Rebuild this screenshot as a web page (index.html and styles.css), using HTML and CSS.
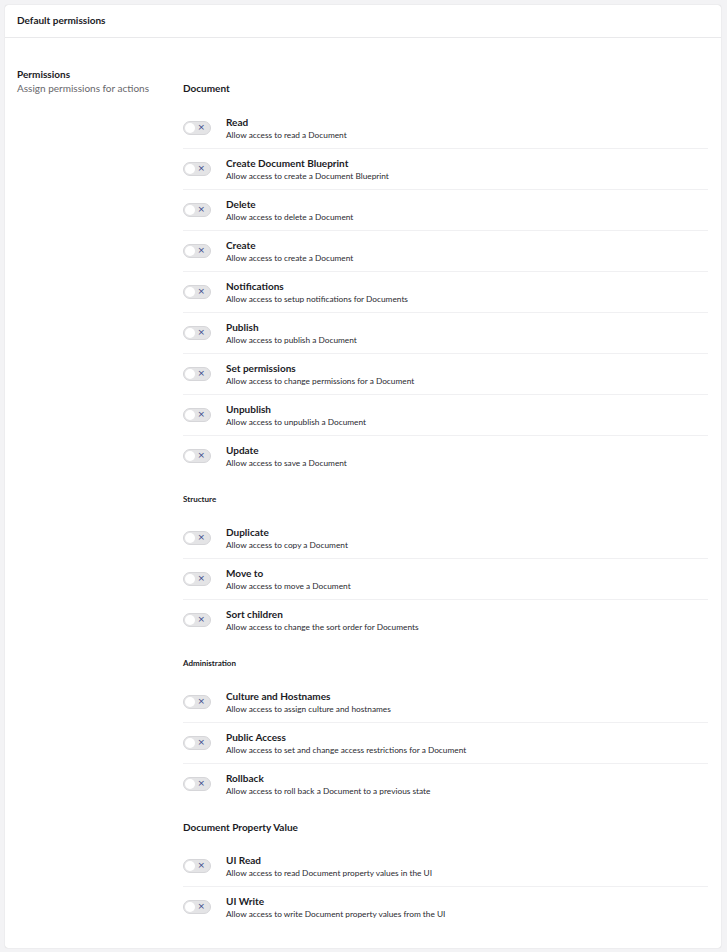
FILE: index.html
```html
<!DOCTYPE html>
<html>
<head>
<meta charset="utf-8">
<link rel="stylesheet" href="styles.css">
</head>
<body>
<div class="card">
  <div class="card-header">Default permissions</div>
  <div class="card-body">
    <div class="prop-label">
      <div class="prop-title">Permissions</div>
      <div class="prop-desc">Assign permissions for actions</div>
    </div>
    <div class="prop-editor">
      <div class="group-title big">Document</div>
      <div class="perm"><span class="toggle"><span class="knob"></span><span class="x">×</span></span><div class="perm-text"><div class="perm-name">Read</div><div class="perm-desc">Allow access to read a Document</div></div></div>
      <div class="perm"><span class="toggle"><span class="knob"></span><span class="x">×</span></span><div class="perm-text"><div class="perm-name">Create Document Blueprint</div><div class="perm-desc">Allow access to create a Document Blueprint</div></div></div>
      <div class="perm"><span class="toggle"><span class="knob"></span><span class="x">×</span></span><div class="perm-text"><div class="perm-name">Delete</div><div class="perm-desc">Allow access to delete a Document</div></div></div>
      <div class="perm"><span class="toggle"><span class="knob"></span><span class="x">×</span></span><div class="perm-text"><div class="perm-name">Create</div><div class="perm-desc">Allow access to create a Document</div></div></div>
      <div class="perm"><span class="toggle"><span class="knob"></span><span class="x">×</span></span><div class="perm-text"><div class="perm-name">Notifications</div><div class="perm-desc">Allow access to setup notifications for Documents</div></div></div>
      <div class="perm"><span class="toggle"><span class="knob"></span><span class="x">×</span></span><div class="perm-text"><div class="perm-name">Publish</div><div class="perm-desc">Allow access to publish a Document</div></div></div>
      <div class="perm"><span class="toggle"><span class="knob"></span><span class="x">×</span></span><div class="perm-text"><div class="perm-name">Set permissions</div><div class="perm-desc">Allow access to change permissions for a Document</div></div></div>
      <div class="perm"><span class="toggle"><span class="knob"></span><span class="x">×</span></span><div class="perm-text"><div class="perm-name">Unpublish</div><div class="perm-desc">Allow access to unpublish a Document</div></div></div>
      <div class="perm"><span class="toggle"><span class="knob"></span><span class="x">×</span></span><div class="perm-text"><div class="perm-name">Update</div><div class="perm-desc">Allow access to save a Document</div></div></div>

      <div class="group-title small">Structure</div>
      <div class="perm"><span class="toggle"><span class="knob"></span><span class="x">×</span></span><div class="perm-text"><div class="perm-name">Duplicate</div><div class="perm-desc">Allow access to copy a Document</div></div></div>
      <div class="perm"><span class="toggle"><span class="knob"></span><span class="x">×</span></span><div class="perm-text"><div class="perm-name">Move to</div><div class="perm-desc">Allow access to move a Document</div></div></div>
      <div class="perm"><span class="toggle"><span class="knob"></span><span class="x">×</span></span><div class="perm-text"><div class="perm-name">Sort children</div><div class="perm-desc">Allow access to change the sort order for Documents</div></div></div>

      <div class="group-title small">Administration</div>
      <div class="perm"><span class="toggle"><span class="knob"></span><span class="x">×</span></span><div class="perm-text"><div class="perm-name">Culture and Hostnames</div><div class="perm-desc">Allow access to assign culture and hostnames</div></div></div>
      <div class="perm"><span class="toggle"><span class="knob"></span><span class="x">×</span></span><div class="perm-text"><div class="perm-name">Public Access</div><div class="perm-desc">Allow access to set and change access restrictions for a Document</div></div></div>
      <div class="perm"><span class="toggle"><span class="knob"></span><span class="x">×</span></span><div class="perm-text"><div class="perm-name">Rollback</div><div class="perm-desc">Allow access to roll back a Document to a previous state</div></div></div>

      <div class="group-title big">Document Property Value</div>
      <div class="perm"><span class="toggle"><span class="knob"></span><span class="x">×</span></span><div class="perm-text"><div class="perm-name">UI Read</div><div class="perm-desc">Allow access to read Document property values in the UI</div></div></div>
      <div class="perm"><span class="toggle"><span class="knob"></span><span class="x">×</span></span><div class="perm-text"><div class="perm-name">UI Write</div><div class="perm-desc">Allow access to write Document property values from the UI</div></div></div>
    </div>
  </div>
</div>
</body>
</html>
```

FILE: styles.css
```css
html, body {
  margin: 0;
  padding: 0;
  background: #f3f3f5;
}
body {
  font-family: Lato, "Noto Sans", sans-serif;
  color: #1b1b1f;
  padding: 5px 6px 4px 5px;
}
.card {
  background: #fff;
  border-radius: 3px;
  box-shadow: 0 0 1px rgba(0,0,0,0.25);
  min-height: 943px;
  box-sizing: border-box;
}
.card-header {
  height: 33px;
  box-sizing: border-box;
  padding: 8px 12px 0;
  font-size: 10px;
  font-weight: 700;
  line-height: 14px;
  border-bottom: 1px solid #e9e9eb;
}
.card-body {
  display: flex;
  padding: 30px 13px 19px 12px;
}
.prop-label {
  width: 166px;
  flex: none;
}
.prop-title {
  font-size: 10px;
  font-weight: 700;
  line-height: 13px;
}
.prop-desc {
  font-size: 10px;
  line-height: 13px;
  color: #68676b;
  margin-top: 1px;
}
.prop-editor {
  flex: 1;
  padding-top: 14px;
}
.group-title {
  font-weight: 700;
  line-height: 12px;
}
.group-title.big {
  font-size: 10px;
  margin-bottom: 14px;
}
.group-title.small {
  font-size: 8px;
  margin-top: 17px;
  margin-bottom: 13px;
}
.group-title + .perm { border-top: none; }
.perm + .group-title.big { margin-top: 17px; margin-bottom: 13px; }
.perm {
  display: flex;
  align-items: center;
  gap: 15px;
  padding: 7px 0 7px;
  border-top: 1px solid #f0f0f2;
}
.toggle {
  position: relative;
  flex: none;
  width: 26px;
  height: 12px;
  border-radius: 7px;
  background: #e4e4e6;
  border: 1px solid #d6d6d9;
}
.knob {
  position: absolute;
  left: 1px;
  top: 1px;
  width: 10px;
  height: 10px;
  border-radius: 50%;
  background: #fff;
}
.x {
  position: absolute;
  right: 5px;
  top: -1px;
  font-size: 9px;
  line-height: 13px;
  color: #3b4a8a;
  font-family: "DejaVu Sans", sans-serif;
}
.perm-text {
  display: flex;
  flex-direction: column;
}
.perm-name {
  font-size: 10px;
  font-weight: 700;
  line-height: 14px;
}
.perm-desc {
  font-size: 8.3px;
  line-height: 12px;
  color: #2a2a30;
}
```
